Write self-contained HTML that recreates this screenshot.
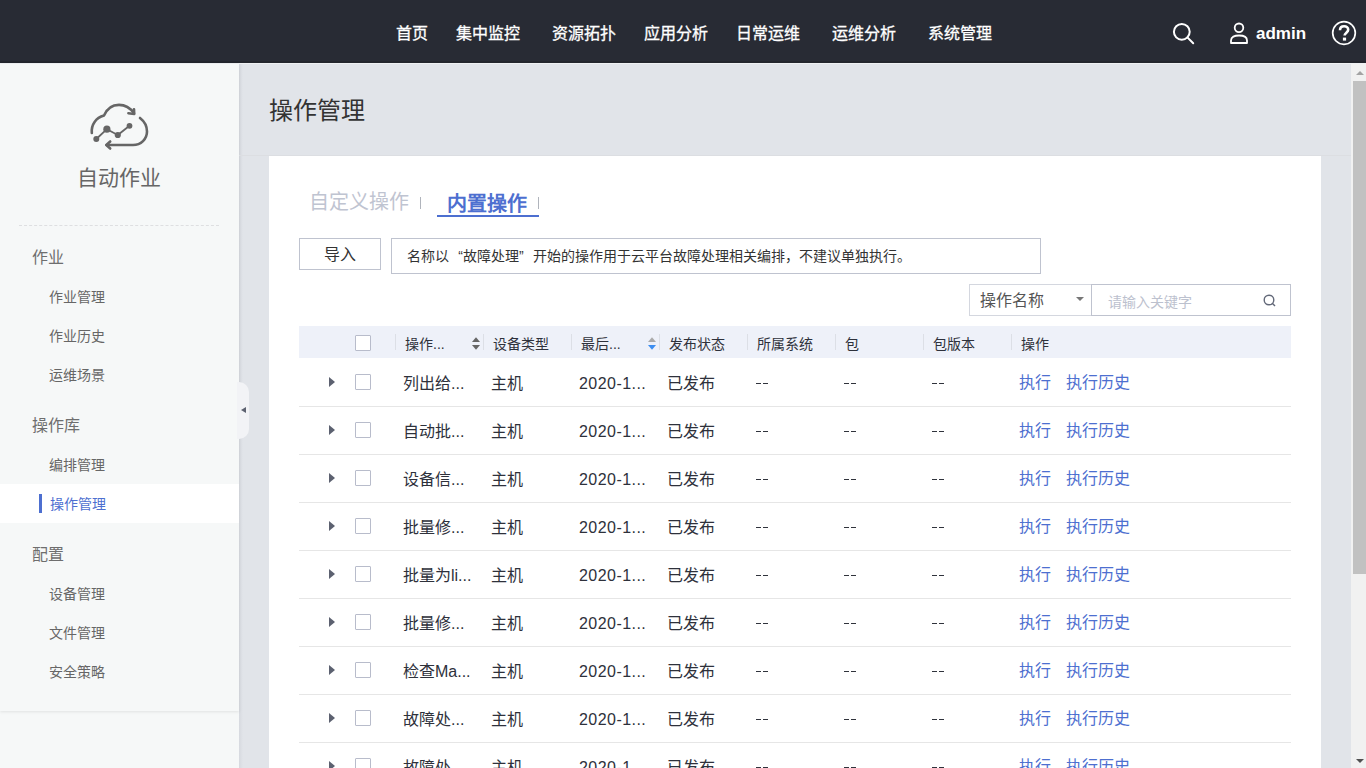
<!DOCTYPE html>
<html lang="zh-CN"><head><meta charset="utf-8">
<style>
*{box-sizing:border-box;margin:0;padding:0}
html,body{width:1366px;height:768px;overflow:hidden}
body{font-family:"Liberation Sans",sans-serif;background:#e1e4e9;position:relative;color:#333}
.abs{position:absolute;white-space:nowrap}
#nav{position:absolute;left:0;top:0;width:1366px;height:64px;background:#282b34;border-bottom:1px solid #eef0f2;box-shadow:inset 0 -2px 0 #23262d}
#nav .m{position:absolute;top:23px;font-size:16px;line-height:22px;color:#fff;-webkit-text-stroke:0.3px #fff}
#side{position:absolute;left:0;top:64px;width:239px;height:647px;background:#f6f8f8;box-shadow:0 1px 3px rgba(0,0,0,.09)}
#sideb{position:absolute;left:0;top:705px;width:239px;height:63px;background:#f6f8f8}
.g{position:absolute;left:32px;font-size:16px;line-height:20px;color:#6e6e6e}
.it{position:absolute;left:49px;font-size:14px;line-height:18px;color:#666}
#scroll{position:absolute;left:1351px;top:64px;width:15px;height:704px;background:#f1f1f1}
#card{position:absolute;left:269px;top:156px;width:1052px;height:612px;background:#fff}
.th{position:absolute;top:335px;font-size:14px;line-height:18px;color:#2e313b}
.sep{position:absolute;top:334px;width:1px;height:16px;background:#dcdfe6}
.row{position:absolute;left:299px;width:992px;height:48px;border-bottom:1px solid #e6e6e6}
.c{position:absolute;font-size:16px;line-height:22px;color:#2e313b;white-space:nowrap}
.cb{position:absolute;width:16px;height:16px;border:1px solid #b8bccb;background:#fff;border-radius:1px}
.tri{position:absolute;width:0;height:0;border-left:6px solid #5c6170;border-top:5px solid transparent;border-bottom:5px solid transparent}
.lk{color:#4d6fd0}
</style></head><body>
<div id="nav">
  <div class="m" style="left:396px">首页</div>
  <div class="m" style="left:456px">集中监控</div>
  <div class="m" style="left:552px">资源拓扑</div>
  <div class="m" style="left:644px">应用分析</div>
  <div class="m" style="left:736px">日常运维</div>
  <div class="m" style="left:832px">运维分析</div>
  <div class="m" style="left:928px">系统管理</div>
  <svg class="abs" style="left:1170px;top:20px" width="28" height="28" viewBox="0 0 28 28"><circle cx="11.8" cy="11.8" r="7.9" fill="none" stroke="#fff" stroke-width="2"/><line x1="17.4" y1="17.4" x2="23.2" y2="23.2" stroke="#fff" stroke-width="2" stroke-linecap="round"/></svg>
  <svg class="abs" style="left:1228px;top:21px" width="22" height="24" viewBox="0 0 22 24"><circle cx="11" cy="6.8" r="4.3" fill="none" stroke="#fff" stroke-width="1.8"/><path d="M3 22 V19.5 C3 15.8 6.5 14.5 11 14.5 C15.5 14.5 19 15.8 19 19.5 V22 Z" fill="none" stroke="#fff" stroke-width="1.8" stroke-linejoin="round"/></svg>
  <div class="abs" style="left:1256px;top:22px;font-size:17px;line-height:24px;color:#fff;font-weight:bold">admin</div>
  <svg class="abs" style="left:1330px;top:20px" width="28" height="26" viewBox="0 0 28 26"><circle cx="14" cy="13" r="11.3" fill="none" stroke="#fff" stroke-width="1.7"/><path d="M10 10.2 C10 7.6 11.8 6.2 14.1 6.2 C16.5 6.2 18.2 7.7 18.2 9.8 C18.2 12.6 14.6 12.8 14.6 15.6" fill="none" stroke="#fff" stroke-width="2.6"/><rect x="12.9" y="17.6" width="3.2" height="3" fill="#fff"/></svg>
</div>
<div id="sideb"></div><div class="abs" style="left:239px;top:64px;width:4px;height:704px;background:linear-gradient(to right,#d6d9df,#e1e4e9)"></div><div id="side"></div>
  <svg class="abs" style="left:86px;top:100px" width="66" height="54" viewBox="86 100 66 54">
    <g fill="none" stroke="#666" stroke-width="2.6" stroke-linecap="round" stroke-linejoin="round">
      <path d="M91.8 133 C91 124.5 96 117.8 104 115.6 C107 108.6 112.5 104.9 119 104.9 C125.5 104.9 130.5 108.3 134 113.3"/>
      <polyline points="128.4,113.2 134.2,114 134,109.2"/>
      <path d="M140 118 C144.5 121.5 147 126 147 131.5 C147 139 141 145 133 145 L106.5 145"/>
      <polyline points="110.2,141.5 106.3,145 110.2,148.5"/>
      <polyline points="96.3,139 106.9,129.2 117.8,135 129.5,125.8" stroke-width="1.8"/>
    </g>
    <g fill="#666"><circle cx="96.3" cy="139" r="3"/><circle cx="106.9" cy="129.2" r="3.6"/><circle cx="117.8" cy="135" r="3.1"/><circle cx="129.5" cy="125.8" r="2.9"/></g>
  </svg>

<div class="abs" style="left:77px;top:165px;font-size:21px;line-height:26px;color:#666">自动作业</div>
<div class="abs" style="left:19px;top:225px;width:200px;border-top:1px dashed #dedfe1"></div>
<div class="g" style="top:248px">作业</div>
<div class="it" style="top:288px">作业管理</div>
<div class="it" style="top:327px">作业历史</div>
<div class="it" style="top:366px">运维场景</div>
<div class="g" style="top:416px">操作库</div>
<div class="it" style="top:456px">编排管理</div>
<div class="abs" style="left:0;top:484px;width:239px;height:39px;background:#fff"></div>
<div class="abs" style="left:39px;top:494px;width:3px;height:19px;background:#4d6fd0"></div>
<div class="it" style="top:495px;left:50px;color:#4d6fd0">操作管理</div>
<div class="g" style="top:545px">配置</div>
<div class="it" style="top:585px">设备管理</div>
<div class="it" style="top:624px">文件管理</div>
<div class="it" style="top:663px">安全策略</div>
<div class="abs" style="left:237px;top:382px;width:12px;height:57px;background:#f2f3f6;border-radius:0 10px 10px 0"></div>
<div class="abs" style="left:241px;top:407px;width:0;height:0;border-right:5px solid #5c6170;border-top:3.5px solid transparent;border-bottom:3.5px solid transparent"></div>
<div class="abs" style="left:269px;top:96px;font-size:24px;line-height:30px;color:#333">操作管理</div>
<div class="abs" style="left:239px;top:155px;width:1112px;height:1px;background:#dcdee2"></div><div id="card"></div>
<div class="abs" style="left:309px;top:189px;font-size:20px;line-height:26px;color:#bfc4d1">自定义操作</div>
<div class="abs" style="left:420px;top:197px;width:1px;height:12px;background:#b0b4bc"></div>
<div class="abs" style="left:447px;top:191px;font-size:20px;line-height:26px;color:#4d6fd0;font-weight:bold">内置操作</div>
<div class="abs" style="left:437px;top:215px;width:102px;height:2px;background:#4d6fd0"></div>
<div class="abs" style="left:538px;top:197px;width:1px;height:12px;background:#b0b4bc"></div>
<div class="abs" style="left:299px;top:238px;width:82px;height:32px;border:1px solid #bfc3cf;background:#fff;font-size:16px;line-height:32px;text-align:center;color:#333">导入</div>
<div class="abs" style="left:391px;top:238px;width:650px;height:36px;border:1px solid #bfc3cf;background:#fff;font-size:14px;line-height:35px;padding-left:15px;color:#333">名称以<span style="display:inline-block;width:14px;text-align:right">“</span>故障处理<span style="display:inline-block;width:14px;text-align:left">”</span>开始的操作用于云平台故障处理相关编排，不建议单独执行。</div>
<div class="abs" style="left:969px;top:284px;width:123px;height:32px;border:1px solid #d4d7df;background:#fff;font-size:16px;line-height:32px;padding-left:10px;color:#555">操作名称</div>
<div class="abs" style="left:1076px;top:297px;width:0;height:0;border-top:4px solid #777;border-left:4px solid transparent;border-right:4px solid transparent"></div>
<div class="abs" style="left:1091px;top:284px;width:200px;height:32px;border:1px solid #bfc3cf;background:#fff;font-size:14px;line-height:34px;padding-left:16px;color:#bcc1ce">请输入关键字</div>
<svg class="abs" style="left:1262px;top:293px" width="16" height="16" viewBox="0 0 16 16"><circle cx="7" cy="7" r="4.8" fill="none" stroke="#626878" stroke-width="1.4"/><line x1="10.5" y1="10.5" x2="13" y2="13" stroke="#626878" stroke-width="1.4"/></svg>
<div class="abs" style="left:299px;top:326px;width:992px;height:32px;background:#eef1f9"></div>
<div class="cb" style="left:355px;top:335px"></div>
<div class="sep" style="left:395px"></div>
<div class="th" style="left:405px">操作...</div>
<svg class="abs" style="left:472px;top:337px" width="8" height="13" viewBox="0 0 8 13"><path d="M0 4.9 L4 0.2 L8 4.9 Z" fill="#666"/><path d="M0 8.1 L4 12.8 L8 8.1 Z" fill="#666"/></svg>
<div class="sep" style="left:483px"></div>
<div class="th" style="left:493px">设备类型</div>
<div class="sep" style="left:571px"></div>
<div class="th" style="left:581px">最后...</div>
<svg class="abs" style="left:648px;top:337px" width="8" height="13" viewBox="0 0 8 13"><path d="M0 4.9 L4 0.2 L8 4.9 Z" fill="#aaa"/><path d="M0 8.1 L4 12.8 L8 8.1 Z" fill="#3d8ef0"/></svg>
<div class="sep" style="left:659px"></div>
<div class="th" style="left:669px">发布状态</div>
<div class="sep" style="left:747px"></div>
<div class="th" style="left:757px">所属系统</div>
<div class="sep" style="left:835px"></div>
<div class="th" style="left:845px">包</div>
<div class="sep" style="left:923px"></div>
<div class="th" style="left:933px">包版本</div>
<div class="sep" style="left:1011px"></div>
<div class="th" style="left:1021px">操作</div>
<div class="row" style="top:359px"></div><div class="tri" style="left:329px;top:377px"></div><div class="cb" style="left:355px;top:374px"></div><div class="c" style="left:403px;top:373px">列出给...</div><div class="c" style="left:491px;top:373px">主机</div><div class="c" style="letter-spacing:0.45px;left:579px;top:373px">2020-1...</div><div class="c" style="left:667px;top:373px">已发布</div><div class="abs" style="left:756px;top:383px;width:5px;height:1px;background:#30333c"></div><div class="abs" style="left:763px;top:383px;width:5px;height:1px;background:#30333c"></div><div class="abs" style="left:844px;top:383px;width:5px;height:1px;background:#30333c"></div><div class="abs" style="left:851px;top:383px;width:5px;height:1px;background:#30333c"></div><div class="abs" style="left:932px;top:383px;width:5px;height:1px;background:#30333c"></div><div class="abs" style="left:939px;top:383px;width:5px;height:1px;background:#30333c"></div><div class="c lk" style="left:1019px;top:372px">执行</div><div class="c lk" style="left:1066px;top:372px">执行历史</div>
<div class="row" style="top:407px"></div><div class="tri" style="left:329px;top:425px"></div><div class="cb" style="left:355px;top:422px"></div><div class="c" style="left:403px;top:421px">自动批...</div><div class="c" style="left:491px;top:421px">主机</div><div class="c" style="letter-spacing:0.45px;left:579px;top:421px">2020-1...</div><div class="c" style="left:667px;top:421px">已发布</div><div class="abs" style="left:756px;top:431px;width:5px;height:1px;background:#30333c"></div><div class="abs" style="left:763px;top:431px;width:5px;height:1px;background:#30333c"></div><div class="abs" style="left:844px;top:431px;width:5px;height:1px;background:#30333c"></div><div class="abs" style="left:851px;top:431px;width:5px;height:1px;background:#30333c"></div><div class="abs" style="left:932px;top:431px;width:5px;height:1px;background:#30333c"></div><div class="abs" style="left:939px;top:431px;width:5px;height:1px;background:#30333c"></div><div class="c lk" style="left:1019px;top:420px">执行</div><div class="c lk" style="left:1066px;top:420px">执行历史</div>
<div class="row" style="top:455px"></div><div class="tri" style="left:329px;top:473px"></div><div class="cb" style="left:355px;top:470px"></div><div class="c" style="left:403px;top:469px">设备信...</div><div class="c" style="left:491px;top:469px">主机</div><div class="c" style="letter-spacing:0.45px;left:579px;top:469px">2020-1...</div><div class="c" style="left:667px;top:469px">已发布</div><div class="abs" style="left:756px;top:479px;width:5px;height:1px;background:#30333c"></div><div class="abs" style="left:763px;top:479px;width:5px;height:1px;background:#30333c"></div><div class="abs" style="left:844px;top:479px;width:5px;height:1px;background:#30333c"></div><div class="abs" style="left:851px;top:479px;width:5px;height:1px;background:#30333c"></div><div class="abs" style="left:932px;top:479px;width:5px;height:1px;background:#30333c"></div><div class="abs" style="left:939px;top:479px;width:5px;height:1px;background:#30333c"></div><div class="c lk" style="left:1019px;top:468px">执行</div><div class="c lk" style="left:1066px;top:468px">执行历史</div>
<div class="row" style="top:503px"></div><div class="tri" style="left:329px;top:521px"></div><div class="cb" style="left:355px;top:518px"></div><div class="c" style="left:403px;top:517px">批量修...</div><div class="c" style="left:491px;top:517px">主机</div><div class="c" style="letter-spacing:0.45px;left:579px;top:517px">2020-1...</div><div class="c" style="left:667px;top:517px">已发布</div><div class="abs" style="left:756px;top:527px;width:5px;height:1px;background:#30333c"></div><div class="abs" style="left:763px;top:527px;width:5px;height:1px;background:#30333c"></div><div class="abs" style="left:844px;top:527px;width:5px;height:1px;background:#30333c"></div><div class="abs" style="left:851px;top:527px;width:5px;height:1px;background:#30333c"></div><div class="abs" style="left:932px;top:527px;width:5px;height:1px;background:#30333c"></div><div class="abs" style="left:939px;top:527px;width:5px;height:1px;background:#30333c"></div><div class="c lk" style="left:1019px;top:516px">执行</div><div class="c lk" style="left:1066px;top:516px">执行历史</div>
<div class="row" style="top:551px"></div><div class="tri" style="left:329px;top:569px"></div><div class="cb" style="left:355px;top:566px"></div><div class="c" style="left:403px;top:565px">批量为li...</div><div class="c" style="left:491px;top:565px">主机</div><div class="c" style="letter-spacing:0.45px;left:579px;top:565px">2020-1...</div><div class="c" style="left:667px;top:565px">已发布</div><div class="abs" style="left:756px;top:575px;width:5px;height:1px;background:#30333c"></div><div class="abs" style="left:763px;top:575px;width:5px;height:1px;background:#30333c"></div><div class="abs" style="left:844px;top:575px;width:5px;height:1px;background:#30333c"></div><div class="abs" style="left:851px;top:575px;width:5px;height:1px;background:#30333c"></div><div class="abs" style="left:932px;top:575px;width:5px;height:1px;background:#30333c"></div><div class="abs" style="left:939px;top:575px;width:5px;height:1px;background:#30333c"></div><div class="c lk" style="left:1019px;top:564px">执行</div><div class="c lk" style="left:1066px;top:564px">执行历史</div>
<div class="row" style="top:599px"></div><div class="tri" style="left:329px;top:617px"></div><div class="cb" style="left:355px;top:614px"></div><div class="c" style="left:403px;top:613px">批量修...</div><div class="c" style="left:491px;top:613px">主机</div><div class="c" style="letter-spacing:0.45px;left:579px;top:613px">2020-1...</div><div class="c" style="left:667px;top:613px">已发布</div><div class="abs" style="left:756px;top:623px;width:5px;height:1px;background:#30333c"></div><div class="abs" style="left:763px;top:623px;width:5px;height:1px;background:#30333c"></div><div class="abs" style="left:844px;top:623px;width:5px;height:1px;background:#30333c"></div><div class="abs" style="left:851px;top:623px;width:5px;height:1px;background:#30333c"></div><div class="abs" style="left:932px;top:623px;width:5px;height:1px;background:#30333c"></div><div class="abs" style="left:939px;top:623px;width:5px;height:1px;background:#30333c"></div><div class="c lk" style="left:1019px;top:612px">执行</div><div class="c lk" style="left:1066px;top:612px">执行历史</div>
<div class="row" style="top:647px"></div><div class="tri" style="left:329px;top:665px"></div><div class="cb" style="left:355px;top:662px"></div><div class="c" style="left:403px;top:661px">检查Ma...</div><div class="c" style="left:491px;top:661px">主机</div><div class="c" style="letter-spacing:0.45px;left:579px;top:661px">2020-1...</div><div class="c" style="left:667px;top:661px">已发布</div><div class="abs" style="left:756px;top:671px;width:5px;height:1px;background:#30333c"></div><div class="abs" style="left:763px;top:671px;width:5px;height:1px;background:#30333c"></div><div class="abs" style="left:844px;top:671px;width:5px;height:1px;background:#30333c"></div><div class="abs" style="left:851px;top:671px;width:5px;height:1px;background:#30333c"></div><div class="abs" style="left:932px;top:671px;width:5px;height:1px;background:#30333c"></div><div class="abs" style="left:939px;top:671px;width:5px;height:1px;background:#30333c"></div><div class="c lk" style="left:1019px;top:660px">执行</div><div class="c lk" style="left:1066px;top:660px">执行历史</div>
<div class="row" style="top:695px"></div><div class="tri" style="left:329px;top:713px"></div><div class="cb" style="left:355px;top:710px"></div><div class="c" style="left:403px;top:709px">故障处...</div><div class="c" style="left:491px;top:709px">主机</div><div class="c" style="letter-spacing:0.45px;left:579px;top:709px">2020-1...</div><div class="c" style="left:667px;top:709px">已发布</div><div class="abs" style="left:756px;top:719px;width:5px;height:1px;background:#30333c"></div><div class="abs" style="left:763px;top:719px;width:5px;height:1px;background:#30333c"></div><div class="abs" style="left:844px;top:719px;width:5px;height:1px;background:#30333c"></div><div class="abs" style="left:851px;top:719px;width:5px;height:1px;background:#30333c"></div><div class="abs" style="left:932px;top:719px;width:5px;height:1px;background:#30333c"></div><div class="abs" style="left:939px;top:719px;width:5px;height:1px;background:#30333c"></div><div class="c lk" style="left:1019px;top:708px">执行</div><div class="c lk" style="left:1066px;top:708px">执行历史</div>
<div class="row" style="top:743px"></div><div class="tri" style="left:329px;top:761px"></div><div class="cb" style="left:355px;top:758px"></div><div class="c" style="left:403px;top:757px">故障处...</div><div class="c" style="left:491px;top:757px">主机</div><div class="c" style="letter-spacing:0.45px;left:579px;top:757px">2020-1...</div><div class="c" style="left:667px;top:757px">已发布</div><div class="abs" style="left:756px;top:767px;width:5px;height:1px;background:#30333c"></div><div class="abs" style="left:763px;top:767px;width:5px;height:1px;background:#30333c"></div><div class="abs" style="left:844px;top:767px;width:5px;height:1px;background:#30333c"></div><div class="abs" style="left:851px;top:767px;width:5px;height:1px;background:#30333c"></div><div class="abs" style="left:932px;top:767px;width:5px;height:1px;background:#30333c"></div><div class="abs" style="left:939px;top:767px;width:5px;height:1px;background:#30333c"></div><div class="c lk" style="left:1019px;top:756px">执行</div><div class="c lk" style="left:1066px;top:756px">执行历史</div>

<div id="scroll">
  <div class="abs" style="left:5px;top:7px;width:0;height:0;border-bottom:4px solid #a3a3a3;border-left:4px solid transparent;border-right:4px solid transparent"></div>
  <div class="abs" style="left:2px;top:17px;width:13px;height:493px;background:#c1c1c1"></div>
  <div class="abs" style="left:5px;top:695px;width:0;height:0;border-top:4px solid #505050;border-left:4px solid transparent;border-right:4px solid transparent"></div>
</div>
</body></html>
